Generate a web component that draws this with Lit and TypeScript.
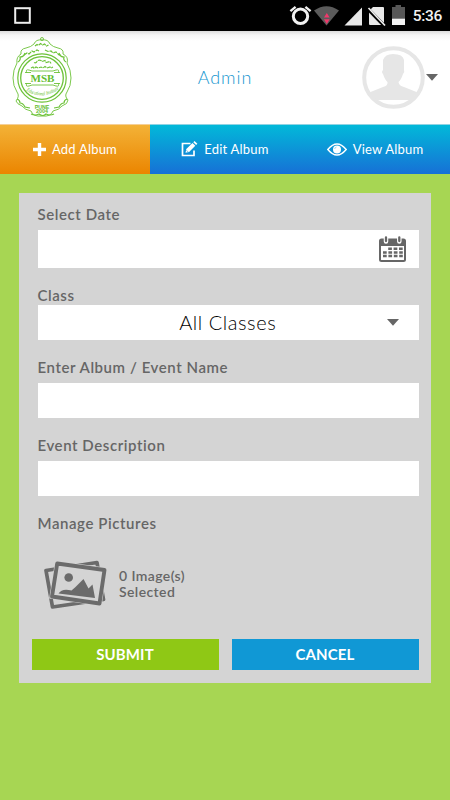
import { LitElement, html, css } from 'lit';
import { customElement, property, state } from 'lit/decorators.js';
import { classMap } from 'lit/directives/class-map.js';

@customElement('status-bar')
export class StatusBar extends LitElement {
  @property() time = '';

  static styles = css`
    :host {
      display: block;
      height: 31px;
      background: #000;
    }

    svg {
      display: block;
    }

    .time {
      fill: #f2f2f2;
      font: 500 15.5px Roboto, sans-serif;
    }
  `;

  render() {
    return html`
      <svg width="450" height="31" viewBox="0 0 450 31">
        <rect x="15.2" y="8.2" width="14.6" height="14.6" fill="none" stroke="#eee" stroke-width="2" />
        <g fill="none" stroke="#f2f2f2">
          <circle cx="300.5" cy="16.3" r="7.2" stroke-width="3" />
          <path d="M290.4 11.2l5.2-4.4M310.6 11.2l-5.2-4.4" stroke-width="2.300" />
        </g>
        <path d="M314 10.5Q326.500 2 339 10.500L326.500 25.500Z" fill="#5b5b5b" />
        <path d="M326.800 13l2.800 4.600h-5.600zM326.800 24l2.800-4.800h-5.600z" fill="#f0386b" />
        <path d="M344.500 25.500L362 7.500V25.500Z" fill="#e8e8e8" />
        <path d="M373 7H383Q384 7 384 8V24Q384 25 383 25H370Q369 25 369 24V11Z" fill="#e8e8e8" />
        <path d="M367.500 8.500L385 26.500" stroke="#000" stroke-width="3.500" />
        <path d="M368.500 8L385 25.500" stroke="#eee" stroke-width="1.700" />
        <path d="M392 7h3.500V5h5.500v2h4v18h-13z" fill="#575757" />
        <path d="M392 18.700h13V25h-13z" fill="#f2f2f2" />
        <text class="time" x="412.800" y="21.300" textLength="29.500">${this.time}</text>
      </svg>
    `;
  }
}

@customElement('school-crest')
export class SchoolCrest extends LitElement {
  static styles = css`
    :host {
      display: block;
      width: 62px;
      height: 82px;
    }

    svg {
      display: block;
    }

    text {
      fill: #63bd2f;
      stroke: none;
      text-anchor: middle;
      font-family: "Liberation Sans", sans-serif;
      font-weight: bold;
    }

    .initials {
      font-family: "Liberation Serif", serif;
      font-size: 11px;
    }

    .script {
      font-family: "Liberation Serif", serif;
      font-style: italic;
      font-weight: normal;
      font-size: 5.5px;
    }

    .city {
      font-size: 5.3px;
    }
  `;

  render() {
    return html`
      <svg width="62" height="82" viewBox="0 0 62 82" fill="none" stroke="#6cc238" stroke-width=".9">
        <path d="M30 3Q24 2 22 7Q19 10 14 11Q8 12 9 17Q4 20 5 26Q1 33 1 41Q1 49 5 55Q8 59 4 64Q5 67 10 69Q13 73 19 74Q21 80 30 79Q39 80 41 74Q47 73 50 69Q56 67 56 63Q52 59 55 55Q59 49 59 41Q59 33 55 26Q57 20 51 17Q52 12 46 11Q41 10 38 7Q36 2 30 3Z" />
        <path d="M6 25q3-2 2-5q4 0 5-4M54 25q-3-2-2-5q-4 0-5-4M5 62q3 1 3 4q3 0 5 4l5 1M55 62q-3 1-3 4q-3 0-5 4l-5 1M19 77q4 2 8 0q4 3 7 0q4 2 8 0" stroke-width="1.200" />
        <circle cx="30" cy="2" r="1.500" />
        <circle cx="30" cy="41" r="24.200" stroke-width="1.200" />
        <circle cx="30" cy="41" r="21.300" stroke-width="1.300" />
        <path d="M23 9l2-1.500 1.500 1 2-2 2 1.500 2-1 2 2 2-1M12 18l3-2 2 1 3-3 2 1 3-2 2 1M33 13l3 1.500 3-.5 2 2 3-1 3 3 2 0" stroke-width="1.200" stroke-dasharray="4 .8" />
        <path d="M22 25.500q2 1 3-1t4-1l1 1 3-1 1 2 4-1 1 2M19 31l2-1 1 1.500 2-1.500 2 1 3-1 2 1 2-1.500 2 1.500 3-1 1 1 2-1" stroke-width="1.100" stroke-dasharray="4 .8" />
        <path d="M15 36q-2-4 2-3l3 1h21l3-1q4-1 2 3M13 35.500h6M42 35.500h6M15 46q-2 4 2 3l3-1h21l3 1q4 1 2-3M13 46.500h6M42 46.500h6" stroke-width=".9" />
        <path id="arc" d="M12.500 52.500Q30 65 48.500 51" stroke="none" />
        <text class="initials" x="30.500" y="44.800" textLength="24" lengthAdjust="spacingAndGlyphs">MSB</text>
        <text class="script"><textPath href="#arc" startOffset="50%" textLength="35" lengthAdjust="spacingAndGlyphs">Educational Institute</textPath></text>
        <text class="city"><tspan x="30" y="71.800">PUNE</tspan><tspan x="30" y="76.200">2004</tspan></text>
      </svg>
    `;
  }
}

const addIcon = html`
  <svg width="13" height="13" viewBox="0 0 13 13">
    <path d="M4.800 0h3.400v4.800H13v3.400H8.200V13H4.800V8.200H0V4.800h4.800z" fill="#fff" />
  </svg>
`;

const editIcon = html`
  <svg width="17" height="16" viewBox="0 0 17 16">
    <path d="M9.500 2.500H1.500V14.500h11.500V9.500" fill="none" stroke="#fff" stroke-width="1.700" />
    <path d="M4.500 11.700l.8-3.600 6.200-6.200 2.800 2.800-6.200 6.200zM12.300 1.200L13.500 0l2.900 2.800-1.300 1.200z" fill="#fff" />
    <path d="M5.500 9.300l1.600 1.600" stroke="#1595d6" stroke-width=".7" />
  </svg>
`;

const viewIcon = html`
  <svg width="20" height="13" viewBox="0 0 20 13">
    <path d="M.8 6.500Q10-4.500 19.200 6.500Q10 17.500.8 6.500Z" fill="none" stroke="#fff" stroke-width="1.400" />
    <circle cx="10" cy="6.500" r="4" fill="#fff" />
    <path d="M7.700 6Q8 4.300 9.500 4" fill="none" stroke="#78c9e8" stroke-width=".7" />
  </svg>
`;

const calendarIcon = html`
  <svg width="27" height="26" viewBox="0 0 27 26">
    <rect x="1" y="3.500" width="25" height="21.500" rx="1.500" fill="#fff" stroke="#666" stroke-width="2" />
    <path d="M1 3h25v7H1z" fill="#666" />
    <path d="M7 1.500v4M20.300 1.500v4" stroke="#fff" stroke-width="4.500" stroke-linecap="round" />
    <path d="M7 1.500v3.500M20.300 1.500v3.500" stroke="#666" stroke-width="2.300" stroke-linecap="round" />
    <path d="M9.200 12.800h14.600M4 16.400h19.800M4 20h19.800" stroke="#666" stroke-width="2.500" stroke-dasharray="3.700 1.700" />
  </svg>
`;

const picturesIcon = html`
  <svg width="64" height="50" viewBox="0 0 64 50" fill="none" stroke="#6b6b6b">
    <path d="M2 10.500L53 2.500L59.500 39.500L8.500 47Z" stroke-width="3.700" stroke-linejoin="round" />
    <path d="M13.200 3.500L60.500 10L55.500 43.500L8 36.500Z" fill="#d4d4d4" stroke="#d4d4d4" stroke-width="5" />
    <path d="M13.200 3.500L60.500 10L55.500 43.500L8 36.500Z" fill="#d4d4d4" stroke-width="3.900" stroke-linejoin="round" />
    <g fill="#6b6b6b" stroke="none">
      <circle cx="24.700" cy="17.500" r="4.300" />
      <path d="M14.500 33.500Q18 28 27.500 30.500L31.500 27L39.500 19L44.500 28.500L48.500 24.500L51 38Z" />
    </g>
  </svg>
`;

const arrowIcon = html`
  <svg width="12" height="7" viewBox="0 0 12 7">
    <path d="M0 0h12L6 6.700z" fill="#666" />
  </svg>
`;

@customElement('app-root')
export class AppRoot extends LitElement {
  @state() activeTab = 'add';
  @state() imageCount = 0;

  tabs = [
    { id: 'add', label: 'Add Album', icon: addIcon },
    { id: 'edit', label: 'Edit Album', icon: editIcon },
    { id: 'view', label: 'View Album', icon: viewIcon }
  ];

  static styles = css`
    :host {
      display: flex;
      flex-direction: column;
      width: 450px;
      height: 800px;
      overflow: hidden;
      background: #a7d653;
      font-family: Lato, "Open Sans", sans-serif;
      color: #666;
    }

    * {
      box-sizing: border-box;
    }

    svg {
      display: block;
      flex: none;
    }

    button {
      border: none;
      border-radius: 0;
      padding: 0;
      font-family: inherit;
      color: #fff;
      cursor: pointer;
    }

    .header {
      display: grid;
      grid-template-columns: 1fr auto 1fr;
      align-items: center;
      height: 93px;
      padding: 0 12px;
      background: linear-gradient(#dcdcdc, #f5f5f5 4px, #fff 10px);
    }

    .title {
      margin: 0;
      padding-bottom: 1px;
      font-size: 18px;
      font-weight: 300;
      letter-spacing: 0.9px;
      color: #1596cf;
    }

    .profile {
      display: flex;
      align-items: center;
      justify-content: flex-end;
      gap: 1px;
    }

    .tabs {
      display: grid;
      grid-template-columns: repeat(3, 1fr);
      height: 50px;
    }

    .tab {
      display: flex;
      align-items: center;
      justify-content: center;
      gap: 6px;
      padding-bottom: 1px;
      border-top: 1px solid #8fd3e4;
      background: linear-gradient(#02b9d9, #1770d6);
      font-size: 13px;
      letter-spacing: 0.2px;
    }

    .tab.active {
      border-top-color: #f5cf96;
      background: linear-gradient(#f3b237, #eb8500);
    }

    .card {
      width: 412.5px;
      height: 490px;
      margin: 19px 0 0 18.5px;
      padding: 13px 12.5px 0 19px;
      background: #d4d4d4;
    }

    .field {
      margin-bottom: 19px;
    }

    .label {
      display: block;
      margin-bottom: 6px;
      line-height: 17px;
      padding-bottom: 1px;
      font-size: 15px;
      font-weight: 600;
      letter-spacing: 0.57px;
    }

    .label.tight {
      margin-bottom: 0;
    }

    .input {
      display: flex;
      align-items: center;
      justify-content: flex-end;
      height: 35px;
      background: #fff;
    }

    .input.date {
      height: 38px;
      padding-right: 12.5px;
    }

    .select {
      display: grid;
      grid-template-columns: 1fr auto 1fr;
      align-items: center;
      height: 35px;
      padding-right: 19.5px;
      padding-left: 19px;
      background: #fff;
      font-size: 20px;
      font-weight: 300;
      color: #000;
    }

    .value {
      grid-column: 2;
      padding-bottom: 1px;
      letter-spacing: 0.55px;
    }

    .select svg {
      justify-self: end;
    }

    .pictures {
      display: flex;
      align-items: center;
      gap: 11.5px;
      height: 50px;
      margin: 27px 0 29px 6px;
    }

    .count {
      padding-bottom: 3px;
      line-height: 16px;
      font-size: 14px;
      font-weight: 600;
      letter-spacing: 0.4px;
    }

    .actions {
      display: grid;
      grid-template-columns: 1fr 1fr;
      gap: 13px;
      margin-left: -6px;
    }

    .action {
      height: 30.5px;
      font-size: 15px;
      font-weight: 700;
      letter-spacing: 0.1px;
    }

    .submit {
      background: #8fc815;
    }

    .cancel {
      background: #1098d5;
    }
  `;

  _selectTab(id: string) {
    this.activeTab = id;
  }

  render() {
    return html`
      <status-bar time="5:36"></status-bar>
      <header class="header">
        <school-crest></school-crest>
        <h1 class="title">Admin</h1>
        <div class="profile">
          <svg width="63" height="63" viewBox="0 0 63 63">
            <clipPath id="face"><circle cx="31.500" cy="31.500" r="28" /></clipPath>
            <circle cx="31.500" cy="31.500" r="29.300" fill="#fff" stroke="#e6e6e6" stroke-width="4" />
            <path clip-path="url(#face)" d="M21 14Q23 8 31 8Q41 8 42 14V24Q43 26 41 28Q39 34 36.500 36Q37 40 42 41L57 47V54H6V47L21 41Q26 40 25.500 36Q23 34 21 28Q19 26 21 24Z" fill="#e6e6e6" />
          </svg>
          ${arrowIcon}
        </div>
      </header>
      <nav class="tabs">
        ${this.tabs.map(tab => html`
          <button
            class=${classMap({ tab: true, active: tab.id === this.activeTab })}
            @click=${() => this._selectTab(tab.id)}
          >
            ${tab.icon}<span>${tab.label}</span>
          </button>
        `)}
      </nav>
      <main class="card">
        <div class="field">
          <span class="label">Select Date</span>
          <div class="input date">${calendarIcon}</div>
        </div>
        <div class="field">
          <span class="label tight">Class</span>
          <div class="select"><span class="value">All Classes</span>${arrowIcon}</div>
        </div>
        <div class="field">
          <span class="label">Enter Album / Event Name</span>
          <div class="input"></div>
        </div>
        <div class="field">
          <span class="label">Event Description</span>
          <div class="input"></div>
        </div>
        <span class="label tight">Manage Pictures</span>
        <div class="pictures">
          ${picturesIcon}
          <div class="count">${this.imageCount} Image(s)<br>Selected</div>
        </div>
        <div class="actions">
          <button class="action submit">SUBMIT</button>
          <button class="action cancel">CANCEL</button>
        </div>
      </main>
    `;
  }
}
